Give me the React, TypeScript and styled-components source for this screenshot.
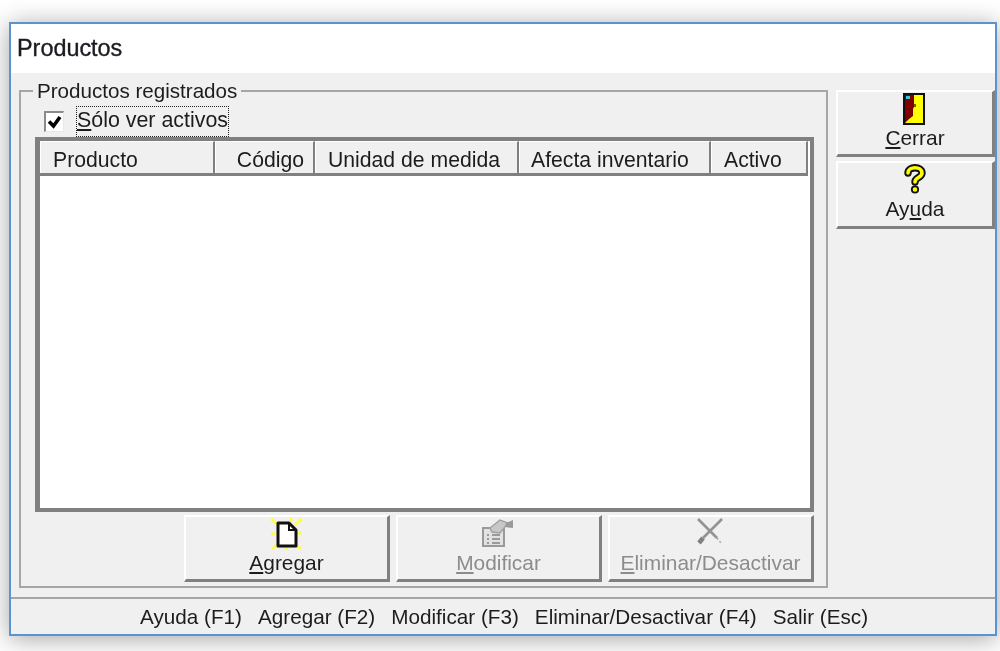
import React from 'react';
import styled, { createGlobalStyle } from 'styled-components';

const GlobalStyle = createGlobalStyle`
  html, body {
    margin: 0;
    padding: 0;
    background: #fff;
    overflow: hidden;
  }
`;

const Page = styled.div`
  box-sizing: border-box;
  width: 1000px;
  height: 651px;
  padding: 22px 3px 15px 9px;
  font-family: "Liberation Sans", Arial, sans-serif;
  color: #1c1c1c;
`;

const Window = styled.div`
  box-sizing: border-box;
  height: 100%;
  display: flex;
  flex-direction: column;
  background: #f0f0f0;
  border: 2px solid #5c92d0;
  box-shadow: 0 3px 24px rgba(0, 0, 0, 0.36);
  filter: blur(0.45px);
`;

const TitleBar = styled.div`
  height: 49px;
  flex: none;
  display: flex;
  align-items: center;
  padding-left: 6px;
  background: #fff;
  font-size: 23.4px;
  -webkit-text-stroke: 0.35px #1c1c2c;
`;

const Content = styled.div`
  flex: 1;
  min-height: 0;
  display: flex;
  gap: 8px;
  padding: 6px 0 9px 8px;
`;

const Group = styled.fieldset`
  box-sizing: border-box;
  width: 809px;
  margin: 0;
  padding: 2px 12px 4px 14px;
  display: flex;
  flex-direction: column;
  border: 2px solid #a6a6a6;
  min-width: 0;
`;

const GroupTitle = styled.legend`
  margin-left: -2px;
  padding: 0 4px 0 4px;
  font-size: 20.6px;
  line-height: 24px;
`;

const CheckRow = styled.label`
  height: 32px;
  flex: none;
  display: flex;
  align-items: center;
  gap: 12px;
  margin-left: 9px;
`;

const CheckBox = styled.span`
  box-sizing: border-box;
  width: 20px;
  height: 21px;
  display: flex;
  align-items: center;
  justify-content: center;
  background: #fff;
  border-style: solid;
  border-width: 2px 1px 1px 2px;
  border-color: #8a8a8a #e8e8e8 #e8e8e8 #8a8a8a;
`;

const CheckText = styled.span`
  box-sizing: border-box;
  height: 31px;
  padding-bottom: 2px;
  display: flex;
  align-items: center;
  white-space: pre;
  border: 1px dotted #222;
  font-size: 21.4px;
`;

const ListFrame = styled.div`
  flex: 1;
  min-height: 0;
  display: flex;
  flex-direction: column;
  background: #fff;
  border-style: solid;
  border-width: 4px 4px 4px 5px;
  border-color: #808080;
`;

const HeaderRow = styled.div`
  display: grid;
  grid-template-columns: 175px 100px 204px 192px 97px;
  width: 768px;
  height: 35px;
  flex: none;
  background: #f0f0f0;
  border-bottom: 3px solid #808080;
  box-sizing: border-box;
`;

const HeaderCell = styled.div<{ $right?: boolean; $pad: number }>`
  box-sizing: border-box;
  display: flex;
  align-items: center;
  justify-content: ${(p) => (p.$right ? 'flex-end' : 'flex-start')};
  padding: ${(p) => (p.$right ? `5px ${p.$pad}px 0 0` : `5px 0 0 ${p.$pad}px`)};
  border-left: 1px solid #fff;
  border-top: 1px solid #fff;
  border-right: 2px solid #808080;
  font-size: 21.2px;
  white-space: nowrap;
`;

const ActionRow = styled.div`
  flex: none;
  display: flex;
  justify-content: flex-end;
  gap: 6px;
  margin: 3px 0 0;
`;

const RaisedButton = styled.button<{ $disabled?: boolean; $w: number; $h: number }>`
  box-sizing: border-box;
  width: ${(p) => p.$w}px;
  height: ${(p) => p.$h}px;
  padding: 1px 0 0;
  display: flex;
  flex-direction: column;
  align-items: center;
  justify-content: flex-start;
  font-family: inherit;
  font-size: 20.9px;
  line-height: 26px;
  background: #f0f0f0;
  color: ${(p) => (p.$disabled ? '#8c8c8c' : '#1c1c1c')};
  border-style: solid;
  border-width: 2px 3px 3px 2px;
  border-color: #fff #808080 #808080 #fff;
  border-radius: 0;
`;

const IconSlot = styled.span`
  height: 32px;
  display: flex;
  align-items: flex-start;
  justify-content: center;
  flex: none;
`;

const SideColumn = styled.div`
  width: 159px;
  display: flex;
  flex-direction: column;
  gap: 4px;
  padding-top: 11px;
`;

const StatusBar = styled.div`
  height: 37px;
  flex: none;
  box-sizing: border-box;
  display: flex;
  align-items: center;
  gap: 16px;
  padding-left: 129px;
  border-top: 2px solid #a6a6a6;
  font-size: 20.7px;
  white-space: nowrap;
`;

const DoorIcon = () => (
  <svg width="22" height="32" viewBox="0 0 22 32" style={{ marginLeft: -2 }}>
    <rect x="1" y="1" width="20" height="30" fill="#ffff00" stroke="#111" strokeWidth="2" />
    <path d="M2 2h9v12l-1 2v7l-4 3-4 4z" fill="#800000" />
    <rect x="3" y="3" width="4" height="3" fill="#35c8e0" />
    <rect x="11" y="11" width="2" height="3" fill="#806000" />
  </svg>
);

const HelpIcon = () => (
  <svg width="24" height="32" viewBox="0 0 24 32">
    <g fill="none" strokeLinecap="round" strokeLinejoin="round">
      <path d="M5 9c0-7 14-7 14 0 0 5-7 4-7 9" stroke="#111" strokeWidth="7.4" />
      <path d="M5 9c0-7 14-7 14 0 0 5-7 4-7 9" stroke="#ffff00" strokeWidth="3.6" />
    </g>
    <circle cx="12" cy="25.5" r="3.2" fill="#ffff00" stroke="#111" strokeWidth="1.8" />
  </svg>
);

const NewDocIcon = () => (
  <svg width="34" height="32" viewBox="0 0 34 32">
    <path d="M1 1l7 6M32 1l-7 6M1 16h4M28 15h4M2 31l6-5M31 31l-6-5M16 29v3M21 0v4" stroke="#ffff40" strokeWidth="2.8" />
    <path d="M8 5h11l7 7v16H8z" fill="#fff" stroke="#111" strokeWidth="3" strokeLinejoin="round" />
    <path d="M19 5v7h7" fill="none" stroke="#111" strokeWidth="2" />
  </svg>
);

const EditIcon = () => (
  <svg width="34" height="32" viewBox="0 0 34 32">
    <path d="M1 10h14l7-2v20H1z" fill="#e2e2e2" stroke="#9a9a9a" strokeWidth="2" />
    <path d="M5 17h2M10 17h8M5 21h2M10 21h8M5 25h2M10 25h8" stroke="#9a9a9a" strokeWidth="2" />
    <path d="M8 10l10-8 8 3-8 10-8-1z" fill="#c8c8c8" stroke="#a0a0a0" strokeWidth="1.4" />
    <path d="M24 5l7-3v8l-8-1z" fill="#9a9a9a" />
  </svg>
);

const DeleteIcon = () => (
  <svg width="28" height="32" viewBox="0 0 28 32">
    <path d="M1 1l19 19" fill="none" stroke="#949494" strokeWidth="2.6" />
    <path d="M25 1L6 20" fill="none" stroke="#949494" strokeWidth="2.6" />
    <path d="M6 20l-4 5" stroke="#808080" strokeWidth="4.5" />
    <path d="M20 20l4 5" stroke="#a6a6a6" strokeWidth="1.5" strokeDasharray="2 2" />
  </svg>
);

const columns = [
  { label: 'Producto', pad: 12 },
  { label: 'Código', pad: 9, right: true },
  { label: 'Unidad de medida', pad: 12 },
  { label: 'Afecta inventario', pad: 11 },
  { label: 'Activo', pad: 12 },
];

const shortcuts = ['Ayuda (F1)', 'Agregar (F2)', 'Modificar (F3)', 'Eliminar/Desactivar (F4)', 'Salir (Esc)'];

export default function App() {
  return (
    <Page>
      <GlobalStyle />
      <Window>
        <TitleBar>Productos</TitleBar>
        <Content>
          <Group>
            <GroupTitle>Productos registrados</GroupTitle>
            <CheckRow>
              <CheckBox>
                <svg width="15" height="14" viewBox="0 0 15 14">
                  <path d="M2 6.5l4.5 4.5 6.5-9" fill="none" stroke="#000" strokeWidth="3.6" />
                </svg>
              </CheckBox>
              <CheckText>
                <span><u>S</u>ólo ver activos</span>
              </CheckText>
            </CheckRow>
            <ListFrame>
              <HeaderRow>
                {columns.map((c) => (
                  <HeaderCell key={c.label} $pad={c.pad} $right={c.right}>{c.label}</HeaderCell>
                ))}
              </HeaderRow>
            </ListFrame>
            <ActionRow>
              <RaisedButton $w={206} $h={67}>
                <IconSlot><NewDocIcon /></IconSlot>
                <span><u>A</u>gregar</span>
              </RaisedButton>
              <RaisedButton $w={206} $h={67} $disabled>
                <IconSlot><EditIcon /></IconSlot>
                <span><u>M</u>odificar</span>
              </RaisedButton>
              <RaisedButton $w={206} $h={67} $disabled>
                <IconSlot><DeleteIcon /></IconSlot>
                <span><u>E</u>liminar/Desactivar</span>
              </RaisedButton>
            </ActionRow>
          </Group>
          <SideColumn>
            <RaisedButton $w={159} $h={67}>
              <IconSlot><DoorIcon /></IconSlot>
              <span><u>C</u>errar</span>
            </RaisedButton>
            <RaisedButton $w={159} $h={68}>
              <IconSlot><HelpIcon /></IconSlot>
              <span>Ay<u>u</u>da</span>
            </RaisedButton>
          </SideColumn>
        </Content>
        <StatusBar>
          {shortcuts.map((s) => (
            <span key={s}>{s}</span>
          ))}
        </StatusBar>
      </Window>
    </Page>
  );
}
